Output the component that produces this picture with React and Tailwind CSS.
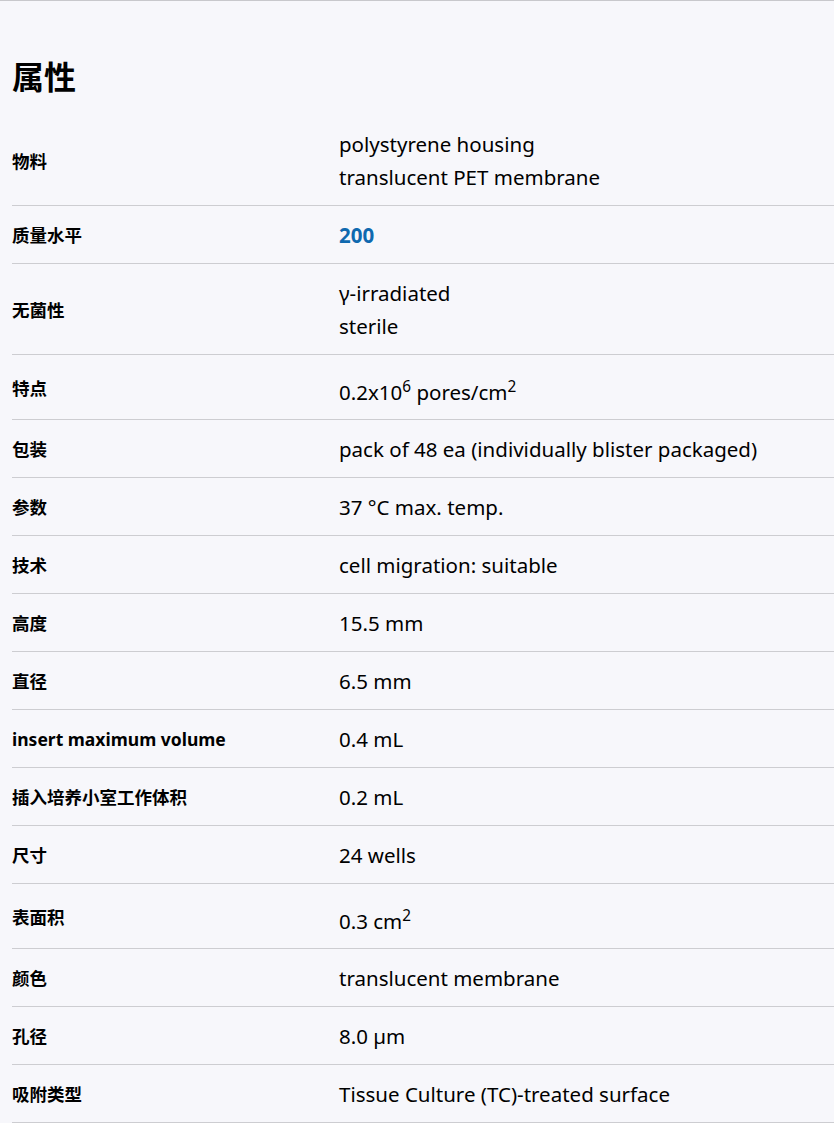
import React from 'react';

const Sup = ({ children }) => (
  <sup className="align-super top-0 leading-none text-[75%]">{children}</sup>
);

const rows = [
  { label: '物料', value: ['polystyrene housing', 'translucent PET membrane'] },
  { label: '质量水平', value: ['200'], link: true },
  { label: '无菌性', value: ['γ-irradiated', 'sterile'] },
  { label: '特点', value: [<>0.2x10<Sup>6</Sup> pores/cm<Sup>2</Sup></>], sup: true },
  { label: '包装', value: ['pack of 48 ea (individually blister packaged)'] },
  { label: '参数', value: ['37 °C max. temp.'] },
  { label: '技术', value: ['cell migration: suitable'] },
  { label: '高度', value: ['15.5 mm'] },
  { label: '直径', value: ['6.5 mm'] },
  { label: 'insert maximum volume', value: ['0.4 mL'] },
  { label: '插入培养小室工作体积', value: ['0.2 mL'] },
  { label: '尺寸', value: ['24 wells'] },
  { label: '表面积', value: [<>0.3 cm<Sup>2</Sup></>], sup: true },
  { label: '颜色', value: ['translucent membrane'] },
  { label: '孔径', value: ['8.0 µm'] },
  { label: '吸附类型', value: ['Tissue Culture (TC)-treated surface'] },
];

const App = () => {
  return (
    <div className="min-h-screen bg-[#f7f7fb] border-t border-[#c8c8cc] font-['Noto_Sans','Noto_Sans_CJK_SC',sans-serif] text-black">
      <div className="pl-3">
        <h2 className="pt-[55px] pb-[18px] text-[32px] leading-[41px] font-bold">属性</h2>
        <div>
          {rows.map((row, i) => (
            <div
              key={i}
              className={`flex items-center border-b border-[#cdcdd1] ${row.sup ? 'pt-[21px] pb-[10px]' : 'pt-[13px] pb-[11px]'}`}
            >
              <div className={`w-[327px] shrink-0 text-[17.5px] font-bold ${row.sup ? '-mt-[8px]' : ''}`}>{row.label}</div>
              <div className={`text-[20.5px] leading-[33px] ${row.link ? 'text-[#0f69af] font-bold' : ''}`}>
                {row.value.map((v, j) => (
                  <div key={j}>{v}</div>
                ))}
              </div>
            </div>
          ))}
        </div>
      </div>
    </div>
  );
};

export default App;
